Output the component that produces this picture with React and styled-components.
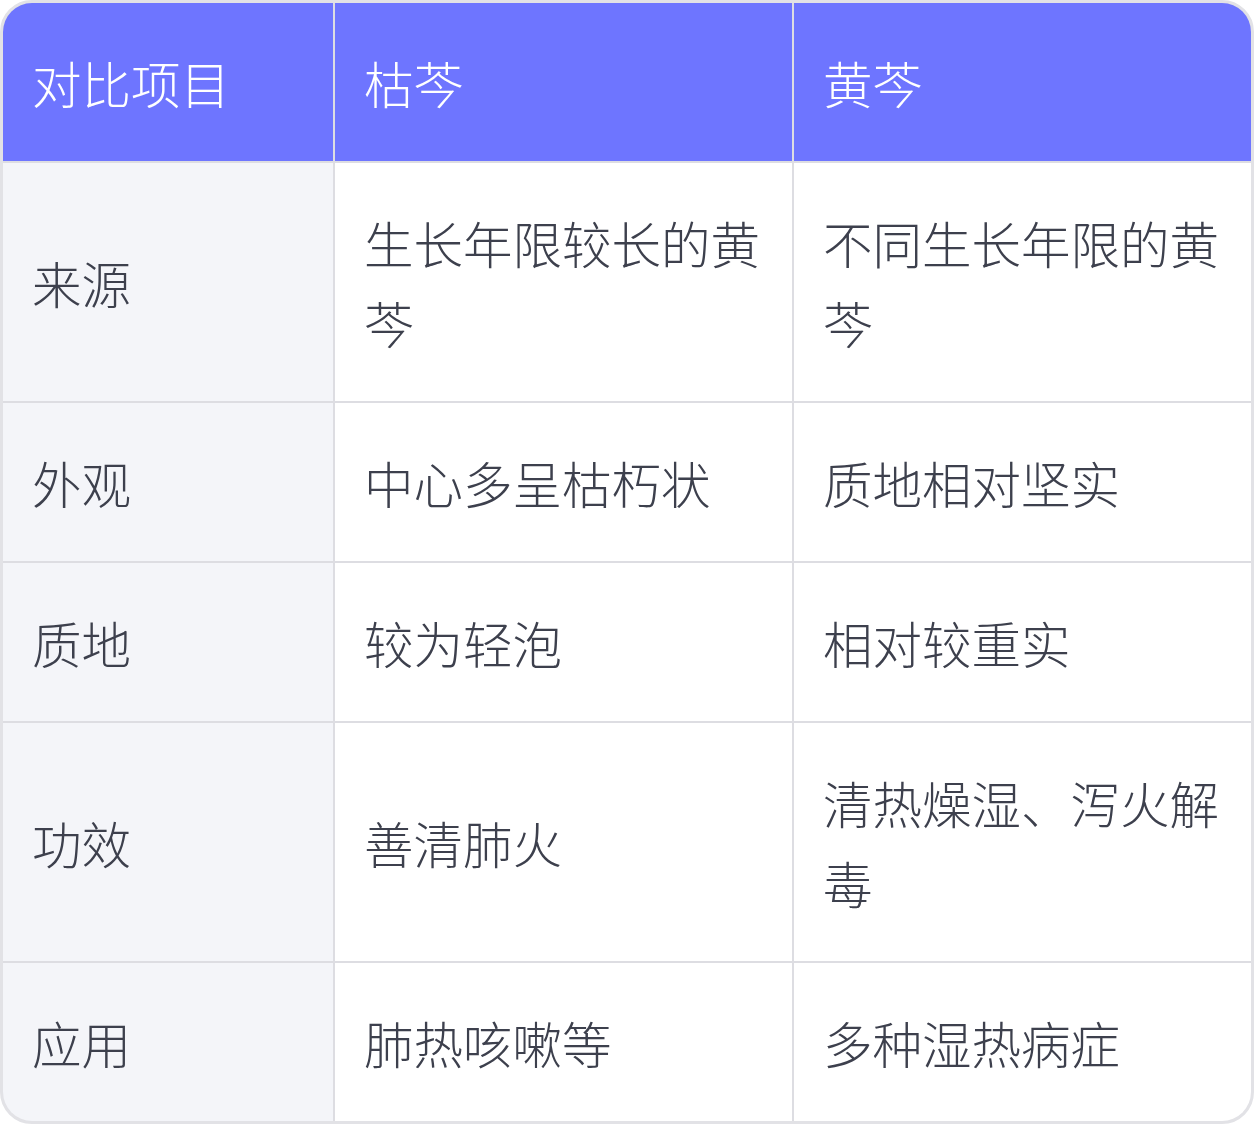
import React from "react";
import styled, { createGlobalStyle } from "styled-components";

const rows = [
  ["来源", "生长年限较长的黄芩", "不同生长年限的黄芩"],
  ["外观", "中心多呈枯朽状", "质地相对坚实"],
  ["质地", "较为轻泡", "相对较重实"],
  ["功效", "善清肺火", "清热燥湿、泻火解毒"],
  ["应用", "肺热咳嗽等", "多种湿热病症"],
];

const App = () => {
  return (
    <>
      <Global />
      <Table>
        <Head>对比项目</Head>
        <Head>枯芩</Head>
        <Head>黄芩</Head>
        {rows.map((r) => (
          <React.Fragment key={r[0]}>
            <Cell $first>{r[0]}</Cell>
            <Cell>{r[1]}</Cell>
            <Cell>{r[2]}</Cell>
          </React.Fragment>
        ))}
      </Table>
    </>
  );
};

export default App;

const Global = createGlobalStyle`
  body {
    margin: 0;
    background: #ffffff;
    font-family: "Noto Sans CJK SC", "Noto Sans", sans-serif;
  }
`;

const Table = styled.div`
  width: 1254px;
  box-sizing: border-box;
  display: grid;
  grid-template-columns: 330px 457px 1fr;
  gap: 2px;
  background: #dddde2;
  border: 3px solid #e2e2e6;
  border-radius: 32px;
  overflow: hidden;
`;

const Head = styled.div`
  background: #6e75ff;
  color: #ffffff;
  font-size: 49.5px;
  font-weight: 300;
  line-height: 80px;
  padding: 40px 29px 38px;
  display: flex;
  align-items: center;
`;

const Cell = styled.div`
  background: ${(p) => (p.$first ? "#f4f5f9" : "#ffffff")};
  color: #3d404d;
  font-size: 49.5px;
  font-weight: 300;
  line-height: 80px;
  padding: 40px 29px 38px;
  display: flex;
  align-items: center;
`;
